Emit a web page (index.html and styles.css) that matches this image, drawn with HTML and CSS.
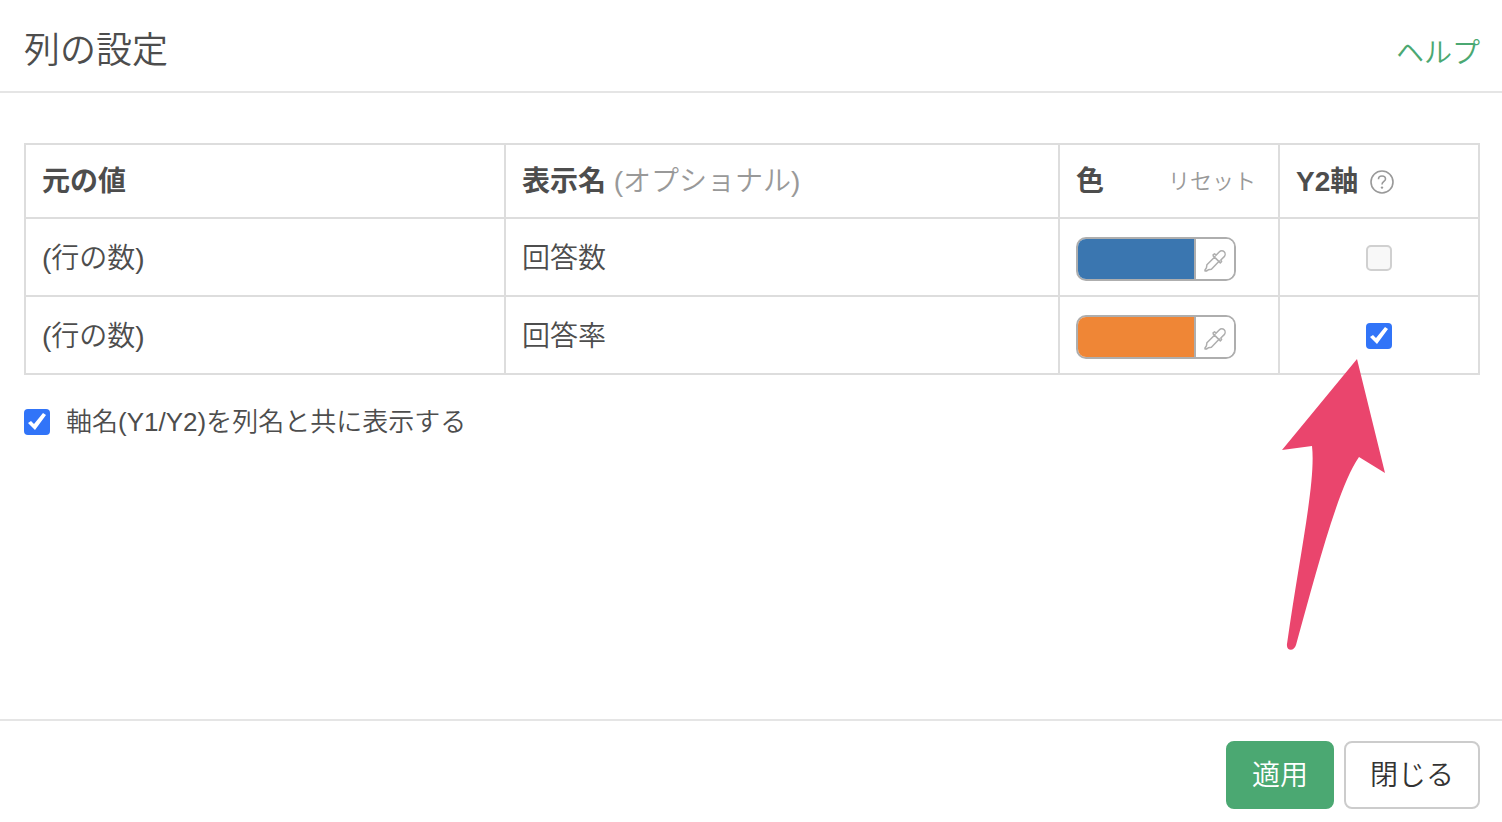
FILE: index.html
```html
<!DOCTYPE html>
<html lang="ja">
  <head>
    <meta charset="UTF-8" />
    <meta name="viewport" content="width=device-width, initial-scale=1.0" />
    <title>列の設定</title>
    <link rel="stylesheet" href="styles.css">
  </head>
  <body>
    <svg class="sprite" aria-hidden="true">
      <symbol id="dropper" viewBox="0 0 22 22">
        <path d="M11.5 6.2L2.9 14.8L2.4 17.8L1 20V21H2.4L4.3 19.8L7.4 19.2L15.8 10.6M9.2 4.6L10.6 3.8L12 5.2L15.2 2C16.8 .4 19 .6 20.2 1.8C21.4 3 21.5 5.3 20 6.9L16.8 10L17.6 11.4L16.3 12.9L9.2 5.9Z" />
      </symbol>
    </svg>

    <header class="header">
      <h1>列の設定</h1>
      <a class="help-link" href="#">ヘルプ</a>
    </header>

    <main class="content">
      <table class="columns">
        <thead>
          <tr>
            <th class="col-source">元の値</th>
            <th>表示名 <span class="optional">(オプショナル)</span></th>
            <th class="col-color">
              <div class="color-head">
                色
                <button class="reset" type="button">リセット</button>
              </div>
            </th>
            <th class="col-axis">
              <div class="axis-head">
                Y2軸
                <svg class="help-icon" viewBox="0 0 24 24" aria-hidden="true">
                  <circle cx="12" cy="12" r="11" />
                  <path d="M8.5 9.2C8.5 7.2 10 6 12 6S15.5 7.2 15.5 9C15.5 11.6 12 11.4 12 14.6" />
                  <circle class="dot" cx="12" cy="17.6" r="1.2" />
                </svg>
              </div>
            </th>
          </tr>
        </thead>
        <tbody>
          <tr>
            <td>(行の数)</td>
            <td>回答数</td>
            <td>
              <div class="picker">
                <input type="color" value="#3a76b0" aria-label="回答数の色" />
                <button type="button" aria-label="回答数の色を選択"><svg><use href="#dropper" /></svg></button>
              </div>
            </td>
            <td class="axis">
              <input class="check" type="checkbox" aria-label="回答数 Y2軸" disabled />
            </td>
          </tr>
          <tr>
            <td>(行の数)</td>
            <td>回答率</td>
            <td>
              <div class="picker">
                <input type="color" value="#ef8636" aria-label="回答率の色" />
                <button type="button" aria-label="回答率の色を選択"><svg><use href="#dropper" /></svg></button>
              </div>
            </td>
            <td class="axis">
              <input class="check" type="checkbox" aria-label="回答率 Y2軸" checked />
              <svg class="arrow" viewBox="0 0 104 292" aria-hidden="true">
                <path d="M75 0L103 114L77 98C56 128 34 214 14 286C12 293 4 292 5 285C18 194 34 122 30 87L0 91Z" />
              </svg>
            </td>
          </tr>
        </tbody>
      </table>

      <label class="show-axis">
        <input class="check" type="checkbox" checked />
        軸名(Y1/Y2)を列名と共に表示する
      </label>
    </main>

    <footer class="footer">
      <button class="btn btn-primary" type="button">適用</button>
      <button class="btn" type="button">閉じる</button>
    </footer>
  </body>
</html>
```
FILE: styles.css
```css
* {
  box-sizing: border-box;
}
body {
  margin: 0;
  min-height: 100vh;
  display: flex;
  flex-direction: column;
  background-color: #fff;
  color: #4d4d4d;
  font-family: 'Liberation Sans', 'Noto Sans CJK JP', sans-serif;
  font-size: 28px;
  font-weight: 350;
  line-height: 40px;
}
button,
input {
  font: inherit;
  margin: 0;
}
button {
  cursor: pointer;
}
.sprite {
  display: none;
}

/* header */
.header {
  display: flex;
  align-items: baseline;
  justify-content: space-between;
  padding: 25px 22px 14px 24px;
  border-bottom: 2px solid #e5e5e5;
}
h1 {
  margin: 0;
  font-size: 36px;
  font-weight: 350;
  line-height: 52px;
}
.help-link {
  color: #4ba872;
  text-decoration: none;
}

/* table */
.content {
  flex: 1;
  padding: 50px 22px 20px 24px;
}
.columns {
  width: 100%;
  table-layout: fixed;
  border-collapse: collapse;
}
.columns th,
.columns td {
  height: 78px;
  padding: 4px 16px 0;
  border: 2px solid #ddd;
  text-align: left;
}
.columns th {
  height: 74px;
  padding-top: 2px;
  font-weight: bold;
}
.columns .col-source {
  width: 480px;
}
.columns .col-color {
  width: 220px;
}
.columns .col-axis {
  width: 200px;
}
.optional {
  color: #999;
  font-weight: 350;
}
.color-head {
  display: flex;
  align-items: center;
  justify-content: space-between;
  padding-right: 6px;
}
.reset {
  padding: 0;
  border: none;
  background: none;
  color: #999;
  font-size: 22px;
  font-weight: 350;
}
.axis-head {
  display: flex;
  align-items: center;
  gap: 12px;
}
.help-icon {
  width: 24px;
  height: 24px;
  fill: none;
  stroke: #999;
  stroke-width: 1.6;
}
.help-icon .dot {
  fill: #999;
  stroke: none;
}

/* color picker */
.picker {
  display: flex;
  width: 160px;
  height: 44px;
  border: 2px solid #aeaeae;
  border-radius: 10px;
  overflow: hidden;
}
.picker input {
  appearance: none;
  flex: 1;
  min-width: 0;
  height: 40px;
  padding: 0;
  border: none;
  background: none;
}
.picker input::-webkit-color-swatch-wrapper {
  padding: 0;
}
.picker input::-webkit-color-swatch {
  border: none;
  border-radius: 0;
}
.picker button {
  display: flex;
  width: 40px;
  padding: 11px 8px 0;
  border: none;
  border-left: 2px solid #aeaeae;
  background-color: #fff;
}
.picker svg {
  width: 22px;
  height: 22px;
  fill: none;
  stroke: #aeaeae;
  stroke-width: 1.5;
  stroke-linejoin: round;
}

/* checkboxes */
.check {
  appearance: none;
  display: block;
  flex: none;
  width: 26px;
  height: 26px;
  border: 2px solid #d0d0d0;
  border-radius: 5px;
  background-color: #f8f8f8;
}
.check:checked {
  border: none;
  border-radius: 4px;
  background-color: #3174f8;
}
.check:checked::after {
  content: '';
  display: block;
  height: 26px;
  background-color: #fff;
  clip-path: polygon(4px 14px, 7px 12px, 10px 15px, 19px 4px, 22px 6px, 11px 21px);
}
.columns .axis {
  position: relative;
  padding-top: 2px;
}
.axis .check {
  margin: 0 auto;
}
.arrow {
  position: absolute;
  top: 62px;
  left: 2px;
  width: 104px;
  height: 292px;
  fill: #ea456d;
  pointer-events: none;
}
.show-axis {
  display: flex;
  align-items: center;
  gap: 16px;
  width: fit-content;
  margin-top: 27px;
  font-size: 26px;
}

/* footer */
.footer {
  display: flex;
  justify-content: flex-end;
  gap: 10px;
  padding: 20px 22px 13px;
  border-top: 2px solid #e5e5e5;
}
.btn {
  height: 68px;
  padding: 2px 24px 0;
  border: 2px solid #ccc;
  border-radius: 8px;
  background-color: #fff;
  color: #333;
}
.btn-primary {
  border-color: #4ba872;
  background-color: #4ba872;
  color: #fff;
}
```
